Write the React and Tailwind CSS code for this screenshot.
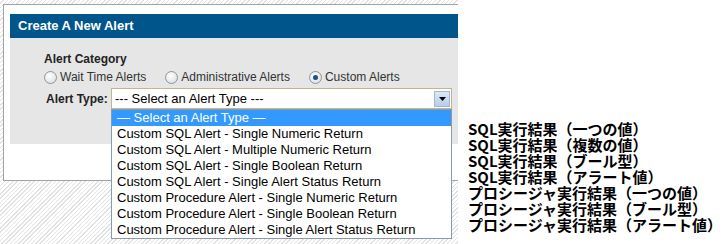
const OPTIONS = [
  'Custom SQL Alert - Single Numeric Return',
  'Custom SQL Alert - Multiple Numeric Return',
  'Custom SQL Alert - Single Boolean Return',
  'Custom SQL Alert - Single Alert Status Return',
  'Custom Procedure Alert - Single Numeric Return',
  'Custom Procedure Alert - Single Boolean Return',
  'Custom Procedure Alert - Single Alert Status Return',
];

const NOTES = [
  'SQL実行結果（一つの値）',
  'SQL実行結果（複数の値）',
  'SQL実行結果（ブール型）',
  'SQL実行結果（アラート値）',
  'プロシージャ実行結果（一つの値）',
  'プロシージャ実行結果（ブール型）',
  'プロシージャ実行結果（アラート値）',
];

export default function App() {
  return (
    <div
      className="w-[728px] h-[244px] flex bg-white overflow-hidden"
      style={{ fontFamily: '"Liberation Sans", Arial, sans-serif' }}
    >
      {/* ── Left: form on hatched page ───────────────────────── */}
      <div className="w-[458px] h-full shrink-0 overflow-hidden pt-[4px] pl-[3px] bg-[repeating-linear-gradient(135deg,#ffffff_0px,#ffffff_2px,#e2e2e2_2px,#e2e2e2_3px)]">
        <div className="w-[480px] h-[177px] bg-white border border-[#a3a3a3] pt-[9px] pl-[6px]">
          <div className="h-[24px] bg-[#00558a] flex items-center pl-[8px] text-white font-bold text-[13px]">
            Create A New Alert
          </div>

          <div className="h-[106px] bg-[#e6e6e6] pl-[34px] pt-[14px]">
            <div className="text-[12px] leading-[14px] font-bold text-[#222]">Alert Category</div>

            <div className="mt-[3px] h-[16px] flex items-center text-[12px] text-[#333]">
              <Radio label="Wait Time Alerts" />
              <Radio label="Administrative Alerts" className="ml-[19px]" />
              <Radio label="Custom Alerts" className="ml-[19px]" checked />
            </div>

            <div className="mt-[3px] flex items-center">
              <span className="ml-[2px] w-[65px] text-[12px] font-bold text-[#222]">Alert Type:</span>
              <div className="relative w-[341px]">
                <div className="h-[21px] bg-white border border-[#c4b68c] flex items-center pl-[3px] text-[13px] text-black">
                  <span className="flex-1">--- Select an Alert Type ---</span>
                  <span className="w-[16px] h-[16px] mr-[1px] grid place-items-center border border-[#9fb6d4] bg-[linear-gradient(180deg,#dde9f7,#b4cde9)]">
                    <svg width="7" height="4" viewBox="0 0 7 4">
                      <path d="M0 0h7L3.5 4z" fill="#000" />
                    </svg>
                  </span>
                </div>

                {/* open option list */}
                <div className="absolute left-0 top-full w-full bg-white border border-[#8c9aab] text-[13px] leading-[16px] text-black z-10">
                  <div className="h-[16px] pl-[5px] bg-[#3399ff] text-white">— Select an Alert Type —</div>
                  {OPTIONS.map((o) => (
                    <div key={o} className="h-[16px] pl-[5px]">{o}</div>
                  ))}
                </div>
              </div>
            </div>
          </div>
        </div>
      </div>

      {/* ── Right: Japanese notes ─────────────────────────────── */}
      <div
        className="flex-1 pl-[10px] pt-[121px] text-[15px] leading-[16px] font-bold text-black"
        style={{ fontFamily: '"Noto Sans CJK JP", "Liberation Sans", sans-serif' }}
      >
        {NOTES.map((n) => (
          <div key={n} className="h-[16px]">{n}</div>
        ))}
      </div>
    </div>
  );
}

function Radio({ label, checked, className = '' }) {
  return (
    <label className={`flex items-center gap-[3px] ${className}`}>
      <span className="w-[13px] h-[13px] rounded-full border border-[#8f9499] bg-[radial-gradient(circle_at_40%_35%,#ffffff,#d6d8dc)] grid place-items-center">
        {checked && <span className="w-[5px] h-[5px] rounded-full bg-[#1f4f8a]" />}
      </span>
      {label}
    </label>
  );
}
